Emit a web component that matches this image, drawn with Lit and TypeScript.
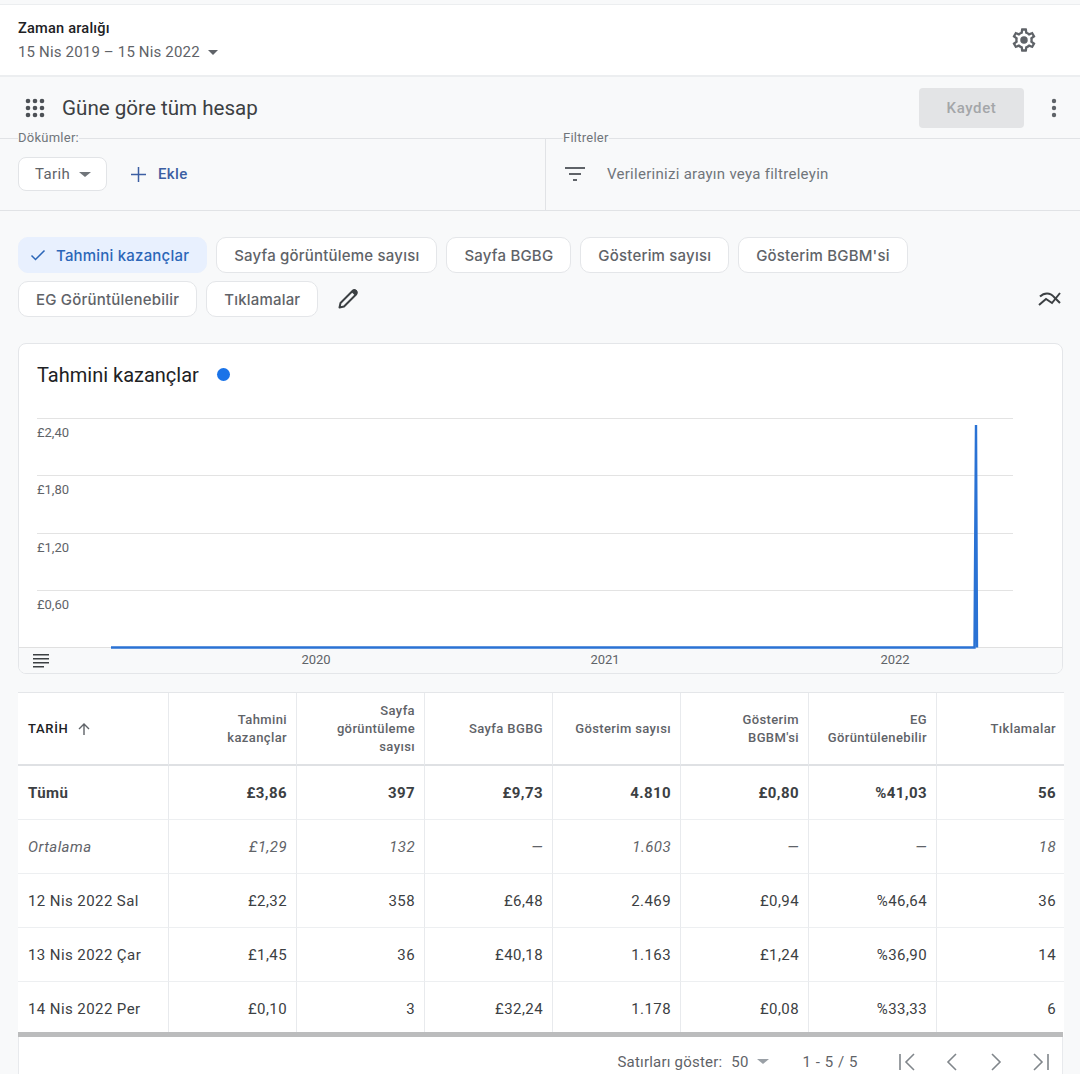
import { LitElement, html, css, svg } from "lit";
import { customElement } from "lit/decorators.js";

const HEAD = ["Tahmini<br>kazançlar", "Sayfa<br>görüntüleme<br>sayısı", "Sayfa BGBG", "Gösterim sayısı", "Gösterim<br>BGBM'si", "EG<br>Görüntülenebilir", "Tıklamalar"];
const ROWS: { cls: string; h: number; c: string[] }[] = [
  { cls: "bold", h: 54, c: ["Tümü", "£3,86", "397", "£9,73", "4.810", "£0,80", "%41,03", "56"] },
  { cls: "ital", h: 54, c: ["Ortalama", "£1,29", "132", "—", "1.603", "—", "—", "18"] },
  { cls: "", h: 54, c: ["12 Nis 2022 Sal", "£2,32", "358", "£6,48", "2.469", "£0,94", "%46,64", "36"] },
  { cls: "", h: 54, c: ["13 Nis 2022 Çar", "£1,45", "36", "£40,18", "1.163", "£1,24", "%36,90", "14"] },
  { cls: "last", h: 50, c: ["14 Nis 2022 Per", "£0,10", "3", "£32,24", "1.178", "£0,08", "%33,33", "6"] },
];

@customElement("app-root")
export class AppRoot extends LitElement {
  static styles = css`
    :host { display: block; width: 1080px; height: 1074px; overflow: hidden; background: #f8f9fa; font-family: Roboto, "Liberation Sans", sans-serif; color: #3c4043; }
    svg { display: block; flex: none; }
    .top { height: 70px; margin-top: 4px; background: #fff; border-top: 1px solid #eceef0; border-bottom: 2px solid #eceef0; display: flex; justify-content: space-between; align-items: center; padding: 0 42px 0 18px; }
    .top-t { font-size: 14.6px; font-weight: 500; color: #202124; line-height: 20px; letter-spacing: .2px; }
    .top-d { font-size: 15px; color: #5f6368; line-height: 20px; margin-top: 4px; display: flex; align-items: center; gap: 7px; letter-spacing: .17px; }
    .caret { width: 0; height: 0; border-left: 5px solid transparent; border-right: 5px solid transparent; border-top: 5px solid #5f6368; }
    .head { height: 61px; display: flex; align-items: center; box-sizing: border-box; padding: 0 14px 0 25px; }
    .title { font-size: 20.6px; color: #3c4043; margin-left: 17px; flex: 1; letter-spacing: 0; }
    .save { width: 105px; height: 40px; border-radius: 4px; background: #e3e4e6; color: #a4a6a9; font-size: 15px; font-weight: 500; display: flex; align-items: center; justify-content: center; margin-right: 27px; letter-spacing: .6px; }
    .bar { height: 73px; box-sizing: border-box; border-top: 1px solid #e1e3e6; border-bottom: 1px solid #e1e3e6; display: flex; }
    .bar-l { width: 546px; flex: none; box-sizing: border-box; border-right: 1px solid #e1e3e6; padding-left: 18px; }
    .bar-r { flex: 1; padding-left: 17px; }
    .legend { display: block; width: fit-content; font-size: 13px; line-height: 16px; color: #70757a; background: #f8f9fa; margin-top: -9px; letter-spacing: .25px; }
    .bar-row { display: flex; align-items: center; margin-top: 11px; }
    .tarih { width: 89px; height: 34px; box-sizing: border-box; border: 1px solid #e2e4e7; border-radius: 8px; background: #fff; font-size: 15px; color: #5f6368; display: flex; align-items: center; padding-left: 16px; gap: 9px; letter-spacing: .35px; }
    .tarih .caret { border-top-color: #70757a; margin-top: 1px; border-left-width: 6px; border-right-width: 6px; }
    .add { display: flex; align-items: center; margin-left: 24px; color: #3c5fa3; font-size: 15px; font-weight: 500; gap: 12px; letter-spacing: .4px; }
    .filter { display: flex; align-items: center; gap: 20px; font-size: 15px; color: #70757a; margin-left: 0; letter-spacing: .28px; }
    .chips { padding: 26px 18px 0; display: flex; flex-wrap: wrap; gap: 8px 9px; width: 1000px; height: 80px; align-items: center; }
    .chip { height: 36px; box-sizing: border-box; border: 1px solid #e4e6e9; background: #fff; border-radius: 10px; padding: 0 17px; display: flex; align-items: center; font-family: Inter, Roboto, sans-serif; font-size: 15px; font-weight: 500; color: #5f6368; letter-spacing: .2px; white-space: nowrap; }
    .chip.on { background: #e8f0fe; border-color: #e8f0fe; color: #2b66b8; padding-left: 10px; gap: 9px; padding-right: 17px; }
    .chips-wrap { display: flex; justify-content: space-between; height: 132px; box-sizing: border-box; }
    .trend { margin: 77px 18px 0 0; }
    .card { margin: 0 17px 0 18px; height: 331px; box-sizing: border-box; border: 1px solid #e4e6e9; border-radius: 8px; background: #fff; overflow: hidden; }
    .card-t { display: flex; align-items: center; padding: 17px 18px 0; font-size: 20px; color: #202124; gap: 18px; height: 27px; }
    .dot { width: 13px; height: 13px; border-radius: 50%; background: #1a73e8; }
    .plot { margin-top: 5px; }
    .grid { margin: 18px 0 0 18px; width: 1046px; background: #fff; border-top: 1px solid #e4e6e9; }
    .tr { display: grid; grid-template-columns: 150px repeat(7, 128px); }
    .th { height: 71px; border-bottom: 2px solid #dfe1e4; border-left: 1px solid #e8eaed; display: flex; align-items: center; justify-content: flex-end; text-align: right; padding-right: 9px; font-size: 13px; line-height: 18px; font-weight: 500; color: #5f6368; letter-spacing: .38px; }
    .th:first-child { justify-content: flex-start; padding-left: 10px; padding-right: 0; color: #202124; letter-spacing: .7px; border-left: 0; gap: 8px; }
    .th:last-child { padding-right: 8px; }
    .td { box-sizing: border-box; border-left: 1px solid #e8eaed; border-bottom: 1px solid #edeff1; display: flex; align-items: center; justify-content: flex-end; padding-right: 9px; font-size: 15px; color: #3c4043; letter-spacing: .42px; }
    .td:first-child { justify-content: flex-start; padding-left: 10px; border-left: 0; padding-right: 0; }
    .tr .td:last-child { padding-right: 8px; }
    .bold .td { font-weight: 700; color: #3c4043; }
    .ital .td { font-style: italic; color: #5f6368; }
    .last .td { border-bottom: 0; padding-top: 4px; }
    .scroll { height: 5px; background: #bbbcbd; margin-right: 1px; }
    .foot { margin: 0 17px 0 18px; height: 37px; background: #fff; border-right: 1px solid #e8eaed; border-left: 1px solid #e8eaed; display: flex; align-items: center; justify-content: flex-end; font-size: 15px; color: #5f6368; padding: 12px 10px 0 0; box-sizing: border-box; letter-spacing: .2px; }
    .foot .caret { border-top-color: #9aa0a6; margin: 0 0 0 8px; border-left-width: 6px; border-right-width: 6px; }
    .foot .rows { margin-left: 9px; }
    .foot .range { margin: 0 38px 0 34px; letter-spacing: .55px; }
    .pager { display: flex; gap: 20px; }
  `;

  render() {
    return html`
      <div class="top">
        <div>
          <div class="top-t">Zaman aralığı</div>
          <div class="top-d">15 Nis 2019 – 15 Nis 2022 <span class="caret" style="margin-left:1px"></span></div>
        </div>
        <svg width="28" height="28" viewBox="0 0 24 24" fill="#5f6368"><path d="M19.43 12.98c.04-.32.07-.64.07-.98s-.03-.66-.07-.98l2.11-1.65c.19-.15.24-.42.12-.64l-2-3.46c-.12-.22-.39-.3-.61-.22l-2.49 1c-.52-.4-1.08-.73-1.69-.98l-.38-2.65C14.46 2.18 14.25 2 14 2h-4c-.25 0-.46.18-.49.42l-.38 2.65c-.61.25-1.17.59-1.69.98l-2.49-1c-.23-.09-.49 0-.61.22l-2 3.46c-.13.22-.07.49.12.64l2.11 1.65c-.04.32-.07.65-.07.98s.03.66.07.98l-2.11 1.65c-.19.15-.24.42-.12.64l2 3.46c.12.22.39.3.61.22l2.49-1c.52.4 1.08.73 1.69.98l.38 2.65c.03.24.24.42.49.42h4c.25 0 .46-.18.49-.42l.38-2.65c.61-.25 1.17-.59 1.69-.98l2.49 1c.23.09.49 0 .61-.22l2-3.46c.12-.22.07-.49-.12-.64l-2.11-1.65zM17.45 11.27c.04.31.05.52.05.73s-.02.43-.05.73l-.14 1.13.89.7 1.08.84-.7 1.21-1.27-.51-1.04-.42-.9.68c-.43.32-.84.56-1.25.73l-1.06.43-.16 1.13-.2 1.35h-1.4l-.19-1.35-.16-1.13-1.06-.43c-.43-.18-.83-.41-1.23-.71l-.91-.7-1.06.43-1.27.51-.7-1.21 1.08-.84.89-.7-.14-1.13c-.03-.31-.05-.54-.05-.74s.02-.43.05-.73l.14-1.13-.89-.7-1.08-.84.7-1.21 1.27.51 1.04.42.9-.68c.43-.32.84-.56 1.25-.73l1.06-.43.16-1.13.2-1.35h1.39l.19 1.35.16 1.13 1.06.43c.43.18.83.41 1.23.71l.91.7 1.06-.43 1.27-.51.7 1.21-1.07.85-.89.7.14 1.13z"/><circle cx="12" cy="12" r="3.2"/></svg>
      </div>

      <div class="head">
        <svg width="20" height="20" viewBox="0 0 20 20" fill="#4d5156">
          ${[3, 10, 17].flatMap((y) => [3, 10, 17].map((x) => svg`<circle cx=${x} cy=${y} r="2.3"></circle>`))}
        </svg>
        <div class="title">Güne göre tüm hesap</div>
        <div class="save">Kaydet</div>
        <svg width="6" height="20" viewBox="0 0 6 20" fill="#5f6368" style="margin-right:9px"><circle cx="3" cy="3" r="2.2"/><circle cx="3" cy="10" r="2.2"/><circle cx="3" cy="17" r="2.2"/></svg>
      </div>

      <div class="bar">
        <div class="bar-l">
          <span class="legend">Dökümler:</span>
          <div class="bar-row">
            <div class="tarih">Tarih <span class="caret"></span></div>
            <div class="add">
              <svg width="15" height="15" viewBox="0 0 14 14" fill="#3c5fa3"><path d="M6.3 0h1.4v6.3H14v1.4H7.7V14H6.3V7.7H0V6.3h6.3z"/></svg>
              Ekle
            </div>
          </div>
        </div>
        <div class="bar-r">
          <span class="legend">Filtreler</span>
          <div class="bar-row" style="height:34px">
            <div class="filter">
              <svg width="24" height="16" viewBox="0 0 24 16" fill="#5f6368"><path d="M2 1h20v2H2zM6 7h12v2H6zM10 13h4v2h-4z"/></svg>
              Verilerinizi arayın veya filtreleyin
            </div>
          </div>
        </div>
      </div>

      <div class="chips-wrap">
        <div class="chips">
          <div class="chip on">
            <svg width="18" height="18" viewBox="0 0 18 18" fill="none" stroke="#2b66b8" stroke-width="1.5"><path d="M2.5 9.5l4 4 9-9"/></svg>
            Tahmini kazançlar
          </div>
          <div class="chip">Sayfa görüntüleme sayısı</div>
          <div class="chip">Sayfa BGBG</div>
          <div class="chip">Gösterim sayısı</div>
          <div class="chip">Gösterim BGBM'si</div>
          <div class="chip">EG Görüntülenebilir</div>
          <div class="chip">Tıklamalar</div>
          <svg width="24" height="24" viewBox="0 0 24 24" style="margin-left:9px"><path d="M3.5 20.5l1-4.5L16.5 4c1-1 2.5-1 3.5 0s1 2.5 0 3.5L8 19.5z" fill="none" stroke="#3c4043" stroke-width="2" stroke-linejoin="round"/><path d="M15.5 5L17 3.2c1.2-.9 2.9-.7 3.8.4.9 1.1.7 2.6-.3 3.6L19 8.5z" fill="#3c4043"/></svg>
        </div>
        <svg class="trend" width="24" height="24" viewBox="0 0 24 24" fill="none" stroke="#3c4043" stroke-width="2"><path d="M2 8.5C6 4.5 12 4 16 9l6 6"/><path d="M1 17l7-6 6 4 8-10"/></svg>
      </div>

      <div class="card">
        <div class="card-t">Tahmini kazançlar <span class="dot"></span></div>
        <svg class="plot" width="1044" height="284" viewBox="0 0 1044 284">
          ${[25, 82, 140, 197].map((y) => svg`<rect x="18" y=${y} width="976" height="1" fill="#e3e3e3"></rect>`)}
          ${([["£2,40", 44], ["£1,80", 101], ["£1,20", 159], ["£0,60", 216]] as [string, number][]).map(
            ([t, y]) => svg`<text x="18" y=${y} font-family="Roboto" font-size="13" fill="#5f6368">${t}</text>`
          )}
          <rect x="0" y="254" width="1044" height="30" fill="#f8f9fa"></rect>
          <rect x="0" y="254" width="1044" height="1" fill="#e0e0e0"></rect>
          <path d="M92 254.5H955.5L957 32L958 254.5" fill="none" stroke="#2a72d4" stroke-width="2.4"></path>
          <path d="M14 261h16v1.6H14zM14 265h16v1.6H14zM14 269h16v1.6H14zM14 273h11v1.6H14z" fill="#3c4043"></path>
          ${([["2020", 297], ["2021", 586], ["2022", 876]] as [string, number][]).map(
            ([t, x]) => svg`<text x=${x} y="271" text-anchor="middle" font-family="Roboto" font-size="13" fill="#5f6368">${t}</text>`
          )}
        </svg>
      </div>

      <div class="grid">
        <div class="tr">
          <div class="th">TARİH
            <svg width="14" height="14" viewBox="0 0 14 14" fill="none" stroke="#5f6368" stroke-width="1.4"><path d="M7 13V2M2 7l5-5 5 5"/></svg>
          </div>
          ${HEAD.map((h) => html`<div class="th"><span .innerHTML=${h}></span></div>`)}
        </div>
        ${ROWS.map(
          (r) => html`<div class="tr ${r.cls}" style="height:${r.h}px">
            ${r.c.map((c) => html`<div class="td">${c}</div>`)}
          </div>`
        )}
        <div class="scroll"></div>
      </div>

      <div class="foot">
        Satırları göster:
        <span class="rows">50</span>
        <span class="caret"></span>
        <span class="range">1 - 5 / 5</span>
        <div class="pager">
          <svg width="24" height="20" viewBox="0 0 24 20" fill="none" stroke="#80868b" stroke-width="1.6"><path d="M4 2v16M18 2l-8 8 8 8"/></svg>
          <svg width="24" height="20" viewBox="0 0 24 20" fill="none" stroke="#80868b" stroke-width="1.6"><path d="M16 2l-8 8 8 8"/></svg>
          <svg width="24" height="20" viewBox="0 0 24 20" fill="none" stroke="#80868b" stroke-width="1.6"><path d="M8 2l8 8-8 8"/></svg>
          <svg width="24" height="20" viewBox="0 0 24 20" fill="none" stroke="#80868b" stroke-width="1.6"><path d="M20 2v16M6 2l8 8-8 8"/></svg>
        </div>
      </div>
    `;
  }
}
